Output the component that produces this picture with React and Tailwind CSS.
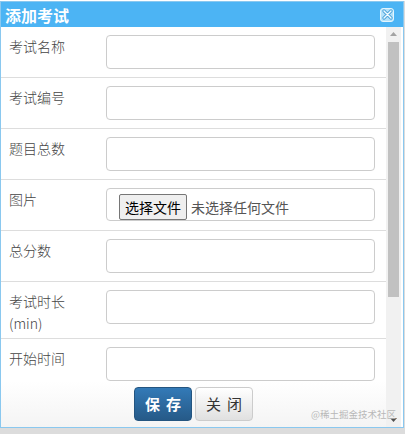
const rows = [
  { label: '考试名称' },
  { label: '考试编号' },
  { label: '题目总数' },
  { label: '图片', file: true },
  { label: '总分数' },
  { label: '考试时长', sub: '(min)', tall: true },
  { label: '开始时间' },
]

function Field({ file }) {
  if (file) {
    return (
      <div className="w-[269px] h-[33px] rounded-[4px] border border-[#ccc] bg-white flex items-center pl-[12px] gap-[4px]">
        <span className="h-[26px] px-[5px] flex items-center rounded-[2px] border border-[#767676] bg-[#efefef] text-[14px] text-black mt-[5px]">
          选择文件
        </span>
        <span className="text-[14px] text-[#555] mt-[5px]">未选择任何文件</span>
      </div>
    )
  }
  return <div className="w-[269px] h-[34px] rounded-[4px] border border-[#ccc] bg-white" />
}

function Scrollbar() {
  return (
    <div className="w-[15px] bg-[#f1f1f1] flex flex-col items-center">
      <div className="h-[14px] flex items-center justify-center">
        <svg width="7" height="4" viewBox="0 0 7 4"><path d="M0 4 L3.5 0 L7 4 Z" fill="#a3a3a3" /></svg>
      </div>
      <div className="w-[11px] h-[255px] bg-[#c1c1c1] mt-[1px]" />
      <div className="flex-1" />
      <div className="h-[14px] flex items-center justify-center">
        <svg width="7" height="4" viewBox="0 0 7 4"><path d="M0 0 L3.5 4 L7 0 Z" fill="#505050" /></svg>
      </div>
    </div>
  )
}

export default function App() {
  return (
    <div className="w-[405px] h-[434px] bg-[#dcdcdc] overflow-hidden" style={{ fontFamily: '"Noto Sans CJK SC", "Noto Sans", sans-serif' }}>
      <div className="h-px bg-white" />
      <div className="w-[404px] h-[427px] border border-[#8ac8ef] bg-white flex flex-col">
        {/* Title bar */}
        <div className="h-[25px] bg-[#4cb4f4] flex items-center justify-between pl-[4px] pr-[9px] shrink-0">
          <span className="text-white text-[16px] font-bold leading-none">添加考试</span>
          <span className="w-[14px] h-[14px] rounded-[3px] bg-[#b4e2fa] border border-[#e4f5fd] flex items-center justify-center">
            <svg width="11" height="11" viewBox="0 0 11 11">
              <path d="M2 2 L9 9 M9 2 L2 9" stroke="#4ea6dc" strokeWidth="3.2" strokeLinecap="round" />
              <path d="M2 2 L9 9 M9 2 L2 9" stroke="#f2fbff" strokeWidth="1.4" strokeLinecap="round" />
            </svg>
          </span>
        </div>

        {/* Body */}
        <div className="flex-1 flex min-h-0">
          <div className="flex-1 flex flex-col min-w-0">
            <div className="flex-1 overflow-hidden">
              {rows.map((r, i) => (
                <div
                  key={i}
                  className={`flex border-b border-[#ddd] ${r.tall ? 'h-[57px]' : 'h-[51px]'}`}
                >
                  <div className="w-[105px] pl-[8px] pt-[8px] text-[14px] leading-[22px] text-[#444] font-light">
                    <div>{r.label}</div>
                    {r.sub && <div>{r.sub}</div>}
                  </div>
                  <div className="pt-[8px]">
                    <Field file={r.file} />
                  </div>
                </div>
              ))}
            </div>
            <div className="h-[46px] shrink-0 bg-gradient-to-b from-white to-[#f4f4f4] flex items-start justify-center gap-[3px] pt-[6px] relative">
              <button className="w-[58px] h-[34px] rounded-[4px] border border-[#245580] bg-gradient-to-b from-[#337ab7] to-[#265a88] text-white text-[15px] font-bold tracking-[6px] pl-[6px]">
                保存
              </button>
              <button className="w-[58px] h-[34px] rounded-[4px] border border-[#ccc] bg-gradient-to-b from-white to-[#e0e0e0] text-[#333] text-[15px] tracking-[6px] pl-[6px]">
                关闭
              </button>
              <span className="absolute right-[-10px] bottom-[8px] text-[9.5px] text-[#b8b8b8] leading-none">@稀土掘金技术社区</span>
            </div>
          </div>
          <Scrollbar />
          <div className="w-[2px]" />
        </div>
      </div>
    </div>
  )
}
